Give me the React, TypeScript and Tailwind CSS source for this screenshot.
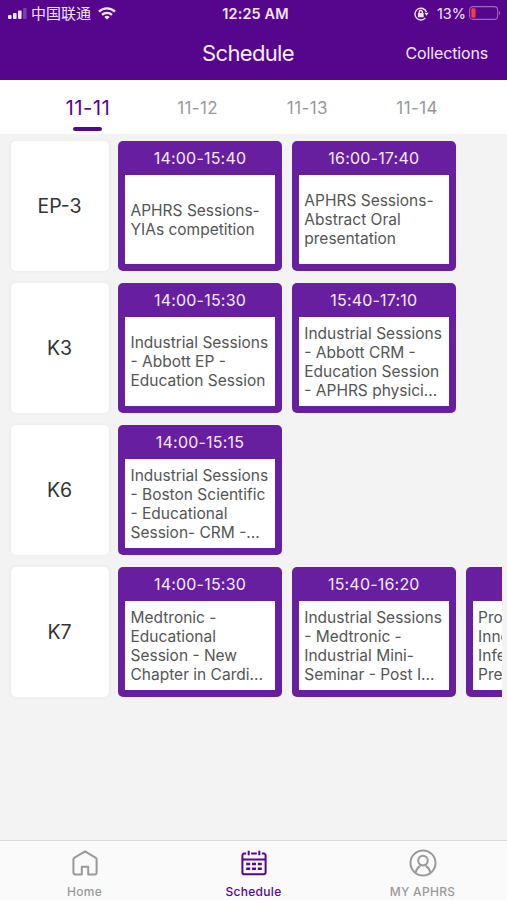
type Session = { time: string; lines: string[] }
type Room = { name: string; sessions: Session[] }

const DATES = ['11-11', '11-12', '11-13', '11-14']

const ROOMS: Room[] = [
  {
    name: 'EP-3',
    sessions: [
      { time: '14:00-15:40', lines: ['APHRS Sessions-', 'YIAs competition'] },
      { time: '16:00-17:40', lines: ['APHRS Sessions-', 'Abstract Oral', 'presentation'] },
    ],
  },
  {
    name: 'K3',
    sessions: [
      { time: '14:00-15:30', lines: ['Industrial Sessions', '- Abbott EP -', 'Education Session'] },
      {
        time: '15:40-17:10',
        lines: ['Industrial Sessions', '- Abbott CRM -', 'Education Session', '- APHRS physici...'],
      },
    ],
  },
  {
    name: 'K6',
    sessions: [
      {
        time: '14:00-15:15',
        lines: ['Industrial Sessions', '- Boston Scientific', '- Educational', 'Session- CRM -...'],
      },
    ],
  },
  {
    name: 'K7',
    sessions: [
      { time: '14:00-15:30', lines: ['Medtronic -', 'Educational', 'Session - New', 'Chapter in Cardi...'] },
      {
        time: '15:40-16:20',
        lines: ['Industrial Sessions', '- Medtronic -', 'Industrial Mini-', 'Seminar - Post I...'],
      },
      { time: '', lines: ['Pro', 'Inno', 'Infe', 'Pre'] },
    ],
  },
]

function StatusBar() {
  return (
    <div className="grid h-7 grid-cols-[1fr_auto_1fr] items-center pl-2 pr-[6px] text-[#f3e6fb]">
      <div className="flex items-center">
        <svg className="-mt-px" width="19" height="11" viewBox="0 0 19 11" fill="currentColor">
          <rect x="0" y="7" width="3.6" height="4" rx="1" />
          <rect x="5" y="5" width="3.6" height="6" rx="1" />
          <rect x="10" y="2.6" width="3.6" height="8.4" rx="1" />
          <rect x="15" y="0" width="3.6" height="11" rx="1" opacity="0.25" />
        </svg>
        <span className="-mt-[3px] ml-1 font-['Noto_Sans_CJK_SC',sans-serif] text-[15px] leading-none">中国联通</span>
        <svg className="-mt-[2px] ml-[7px]" width="18" height="13" viewBox="0 0 18 13" fill="none" stroke="currentColor" strokeWidth="2.3">
          <path d="M1 4.6a11.6 11.6 0 0 1 16 0" />
          <path d="M4 7.8a7.2 7.2 0 0 1 10 0" />
          <path d="M9 12.6 6.3 10a4 4 0 0 1 5.4 0z" fill="currentColor" stroke="none" />
        </svg>
      </div>
      <span className="ml-[2px] text-[14.5px] font-semibold tracking-[0.1px]">12:25 AM</span>
      <div className="flex items-center justify-end">
        <svg className="-mt-px" width="15" height="14" viewBox="0 0 15 14" fill="none" stroke="currentColor" strokeWidth="1.4">
          <path d="M12.4 5A5.9 5.9 0 1 0 11.4 10.9" />
          <path d="M10.4 5.8h4.2l-2.1 3z" fill="currentColor" stroke="none" />
          <rect x="3.9" y="6.1" width="5.8" height="4.2" rx="0.6" fill="currentColor" stroke="none" />
          <path d="M5.2 6.5V5.1a1.6 1.6 0 0 1 3.2 0v1.4" />
        </svg>
        <span className="ml-2 text-[14.5px]">13%</span>
        <svg className="-mt-[2px] ml-[3px]" width="32" height="14" viewBox="0 0 32 14" fill="none">
          <rect x="0.6" y="0.6" width="28" height="12.8" rx="3.4" stroke="#9a6abb" strokeWidth="1.1" />
          <rect x="2.3" y="2.3" width="4.2" height="9.4" rx="1.4" fill="#fb3b35" />
          <path d="M30 4.8a2.6 2.6 0 0 1 0 4.4z" fill="#9a6abb" />
        </svg>
      </div>
    </div>
  )
}

function Header() {
  return (
    <header className="h-20 shrink-0 bg-[#56068c]">
      <StatusBar />
      <div className="grid h-[50px] grid-cols-[1fr_auto_1fr] items-center pl-[8px] pr-[19px]">
        <span />
        <h1 className="text-[22px] tracking-[-0.65px] text-[#f7edfc]">Schedule</h1>
        <button className="text-right text-[16px] tracking-[-0.15px] text-[#f3e6fb]">Collections</button>
      </div>
    </header>
  )
}

function DateTabs() {
  return (
    <nav className="flex h-[54px] shrink-0 bg-white pl-[33px] pr-[35px]">
      {DATES.map((d, i) => (
        <button key={d} className="flex flex-1 flex-col items-center">
          <span
            className={
              i === 0
                ? 'h-[47px] text-[20.5px] leading-[55px] tracking-[0.4px] text-[#56068c]'
                : 'h-[47px] text-[17px] leading-[56px] tracking-[0.4px] text-[#999999]'
            }
          >
            {d}
          </span>
          {i === 0 && <span className="h-[3.5px] w-[29px] rounded-full bg-[#4f0a8a]" />}
        </button>
      ))}
    </nav>
  )
}

function SessionCard({ s }: { s: Session }) {
  return (
    <article className="flex h-[130px] w-[164px] shrink-0 flex-col rounded-[5px] bg-[#671fa0] px-[7px] pb-[7px]">
      <div className="h-[34px] shrink-0 text-center text-[16px] leading-[34px] tracking-[0.2px] text-[#f6eafc]">
        {s.time}
      </div>
      <div className="flex flex-1 flex-col justify-center bg-white pl-[5.5px] text-[15.5px] leading-[19px] text-[#555555]">
        {s.lines.map((line) => (
          <span key={line} className="whitespace-nowrap">
            {line}
          </span>
        ))}
      </div>
    </article>
  )
}

function RoomRow({ room }: { room: Room }) {
  return (
    <section className="flex gap-[9.5px]">
      <div className="flex h-[130px] w-[98px] shrink-0 items-center justify-center rounded-[5px] bg-white pt-[2px] text-[19.5px] text-[#333333] shadow-[0_0_4px_rgba(0,0,0,0.05)]">
        {room.name}
      </div>
      <div className="flex flex-1 gap-[9.8px] overflow-hidden">
        {room.sessions.map((s, i) => (
          <SessionCard key={i} s={s} />
        ))}
      </div>
    </section>
  )
}

function HomeIcon() {
  return (
    <svg width="26" height="26" viewBox="0 0 26 26" fill="none" stroke="currentColor" strokeWidth="2" strokeLinejoin="round">
      <path d="M1.4 9.2a1.6 1.6 0 0 1 .8-1.4L13 1.3l10.8 6.5a1.6 1.6 0 0 1 .8 1.4v13.5a1.8 1.8 0 0 1-1.8 1.8h-6.6v-7.7H9.8v7.7H3.2a1.8 1.8 0 0 1-1.8-1.8z" />
    </svg>
  )
}

function CalendarIcon() {
  return (
    <svg width="26" height="26" viewBox="0 0 26 26" fill="none" stroke="currentColor" strokeWidth="2">
      <path d="M5.2 3.6H3.2a1.8 1.8 0 0 0-1.8 1.8v17a1.8 1.8 0 0 0 1.8 1.8h19.6a1.8 1.8 0 0 0 1.8-1.8v-17a1.8 1.8 0 0 0-1.8-1.8h-2M10.2 3.6h5.6M1.4 9.4h23.2" />
      <path d="M7.7 .8v4.4M18.3 .8v4.4" />
      <path d="M5.2 14h4M11 14h4M16.8 14h4M5.2 18.8h4M11 18.8h4M16.8 18.8h4" strokeWidth="2.5" />
    </svg>
  )
}

function ProfileIcon() {
  return (
    <svg width="28" height="28" viewBox="0 0 28 28" fill="none" stroke="currentColor" strokeWidth="2">
      <circle cx="14" cy="14" r="12.5" />
      <circle cx="14" cy="11.6" r="4.8" />
      <path d="M6.8 23.6c.4-3 1.8-5.2 4.6-6.6M21.2 23.6c-.4-3-1.8-5.2-4.6-6.6" />
    </svg>
  )
}

const NAV = [
  { label: 'Home', icon: HomeIcon, active: false },
  { label: 'Schedule', icon: CalendarIcon, active: true },
  { label: 'MY APHRS', icon: ProfileIcon, active: false },
]

function BottomNav() {
  return (
    <nav className="grid h-[60px] shrink-0 grid-cols-3 border-t border-[#dcdcdc] bg-[#fafafa]">
      {NAV.map(({ label, icon: Icon, active }) => (
        <button
          key={label}
          className={active ? 'flex flex-col items-center text-[#56068c]' : 'flex flex-col items-center text-[#999999]'}
        >
          <span className="flex h-[44px] items-center">
            <Icon />
          </span>
          <span className="-mt-px text-[12px] font-medium leading-[15px] tracking-[0.3px]">{label}</span>
        </button>
      ))}
    </nav>
  )
}

export default function App() {
  return (
    <div className="flex h-[900px] w-[507px] flex-col overflow-hidden bg-[#f3f3f3] font-['Inter',sans-serif]">
      <Header />
      <DateTabs />
      <main className="flex flex-1 flex-col gap-3 pl-[10.5px] pr-[5px] pt-[7px]">
        {ROOMS.map((room) => (
          <RoomRow key={room.name} room={room} />
        ))}
      </main>
      <BottomNav />
    </div>
  )
}
